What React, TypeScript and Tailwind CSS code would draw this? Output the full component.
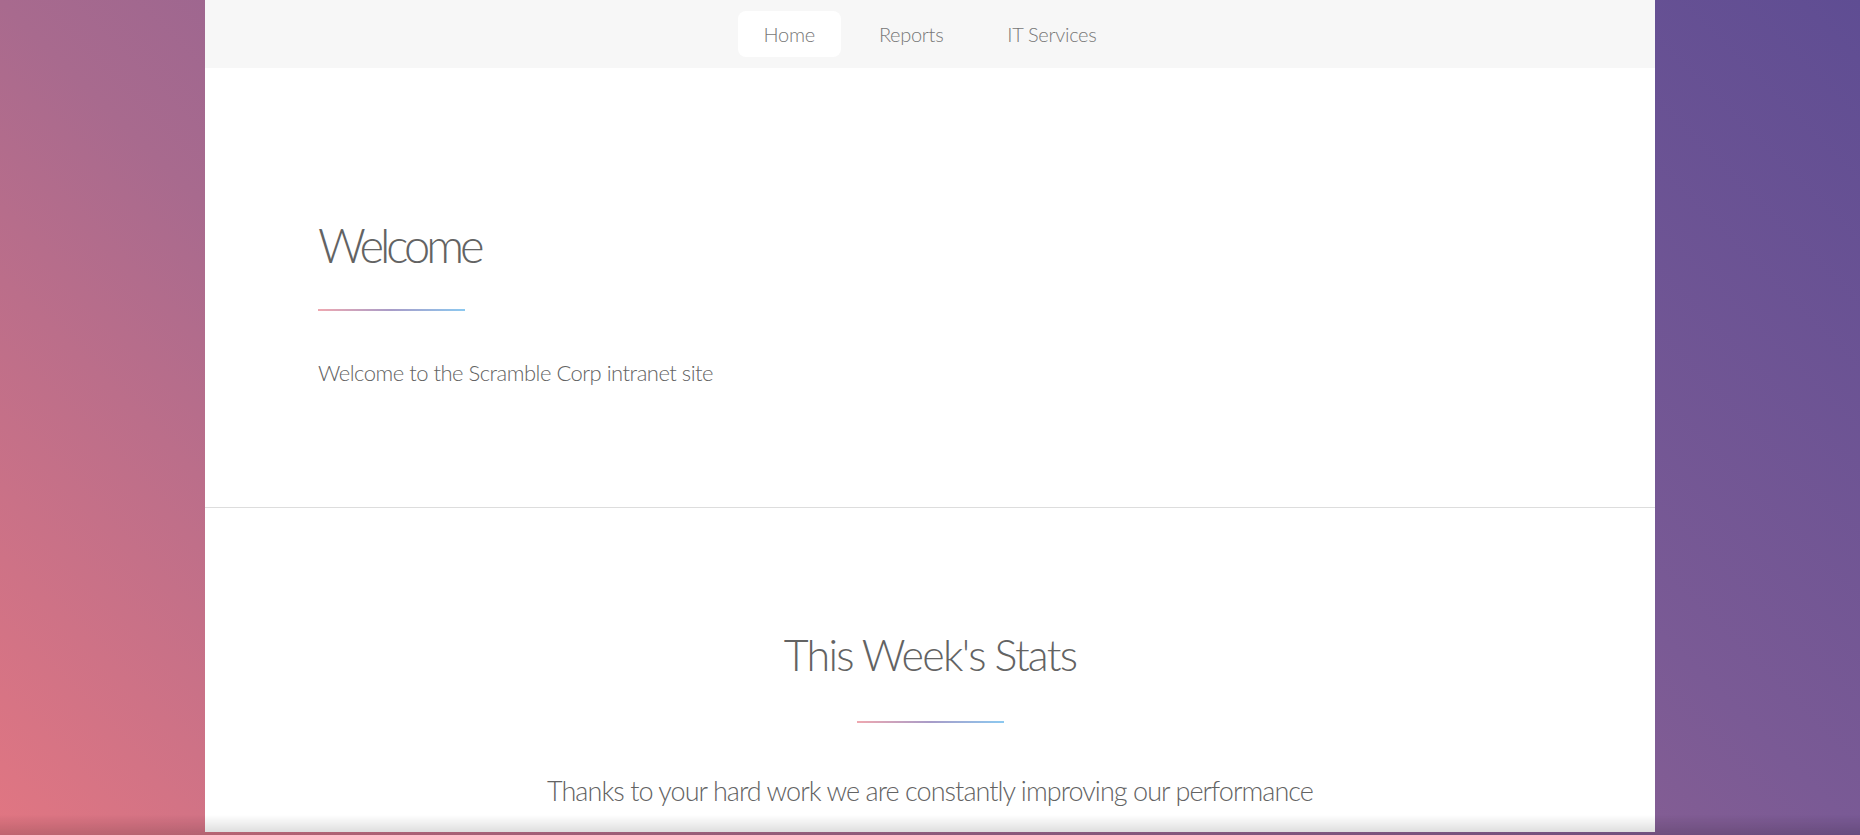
import React from "react";

const navItems = [
  { label: "Home", active: true },
  { label: "Reports", active: false },
  { label: "IT Services", active: false },
];

function Underline({ center = false }: { center?: boolean }) {
  return (
    <div
      className={`h-[2px] w-[147px] bg-[linear-gradient(90deg,#efa8b0,#a89cc8,#8cc9f0)] ${
        center ? "mx-auto" : ""
      }`}
    />
  );
}

export default function App() {
  return (
    <div className="min-h-screen bg-[#935d8c] bg-[linear-gradient(45deg,#e17682_0%,#a86a8e_31%,#7a5a95_69%,#5f4d93_100%)] bg-fixed font-['Source_Sans_Pro','Lato',sans-serif] font-light text-[#636363]">
      <div className="mx-auto w-[1450px] bg-white">
        {/* Nav */}
        <nav className="flex justify-center gap-3 bg-[#f7f7f7] py-[11px]">
          {navItems.map((item) => (
            <a
              key={item.label}
              href="#"
              className={`h-[46px] rounded-lg px-[26px] text-[20px] leading-[46px] tracking-[-0.3px] text-[#777777] ${
                item.active ? "bg-white" : ""
              }`}
            >
              {item.label}
            </a>
          ))}
        </nav>

        {/* Intro */}
        <section className="border-b border-[#dddddd] px-[113px] pt-[146px] pb-[116px]">
          <h2 className="text-[47px] leading-[62px] tracking-[-4px]">Welcome</h2>
          <div className="mt-[33px]">
            <Underline />
          </div>
          <p className="mt-[44px] text-[22px] leading-[36px] tracking-[-0.5px]">
            Welcome to the Scramble Corp intranet site
          </p>
        </section>

        {/* Stats */}
        <section className="px-[113px] pt-[120px] pb-[20px] text-center">
          <h2 className="text-[43px] leading-[54px] tracking-[-1.75px]">This Week's Stats</h2>
          <div className="mt-[39px]">
            <Underline center />
          </div>
          <p className="mt-[47px] text-[27px] leading-[42px] tracking-[-0.95px]">
            Thanks to your hard work we are constantly improving our performance
          </p>
        </section>
      </div>

      {/* bottom fade */}
      <div className="pointer-events-none fixed inset-x-0 bottom-0 h-5 bg-gradient-to-b from-transparent to-black/15" />
    </div>
  );
}
